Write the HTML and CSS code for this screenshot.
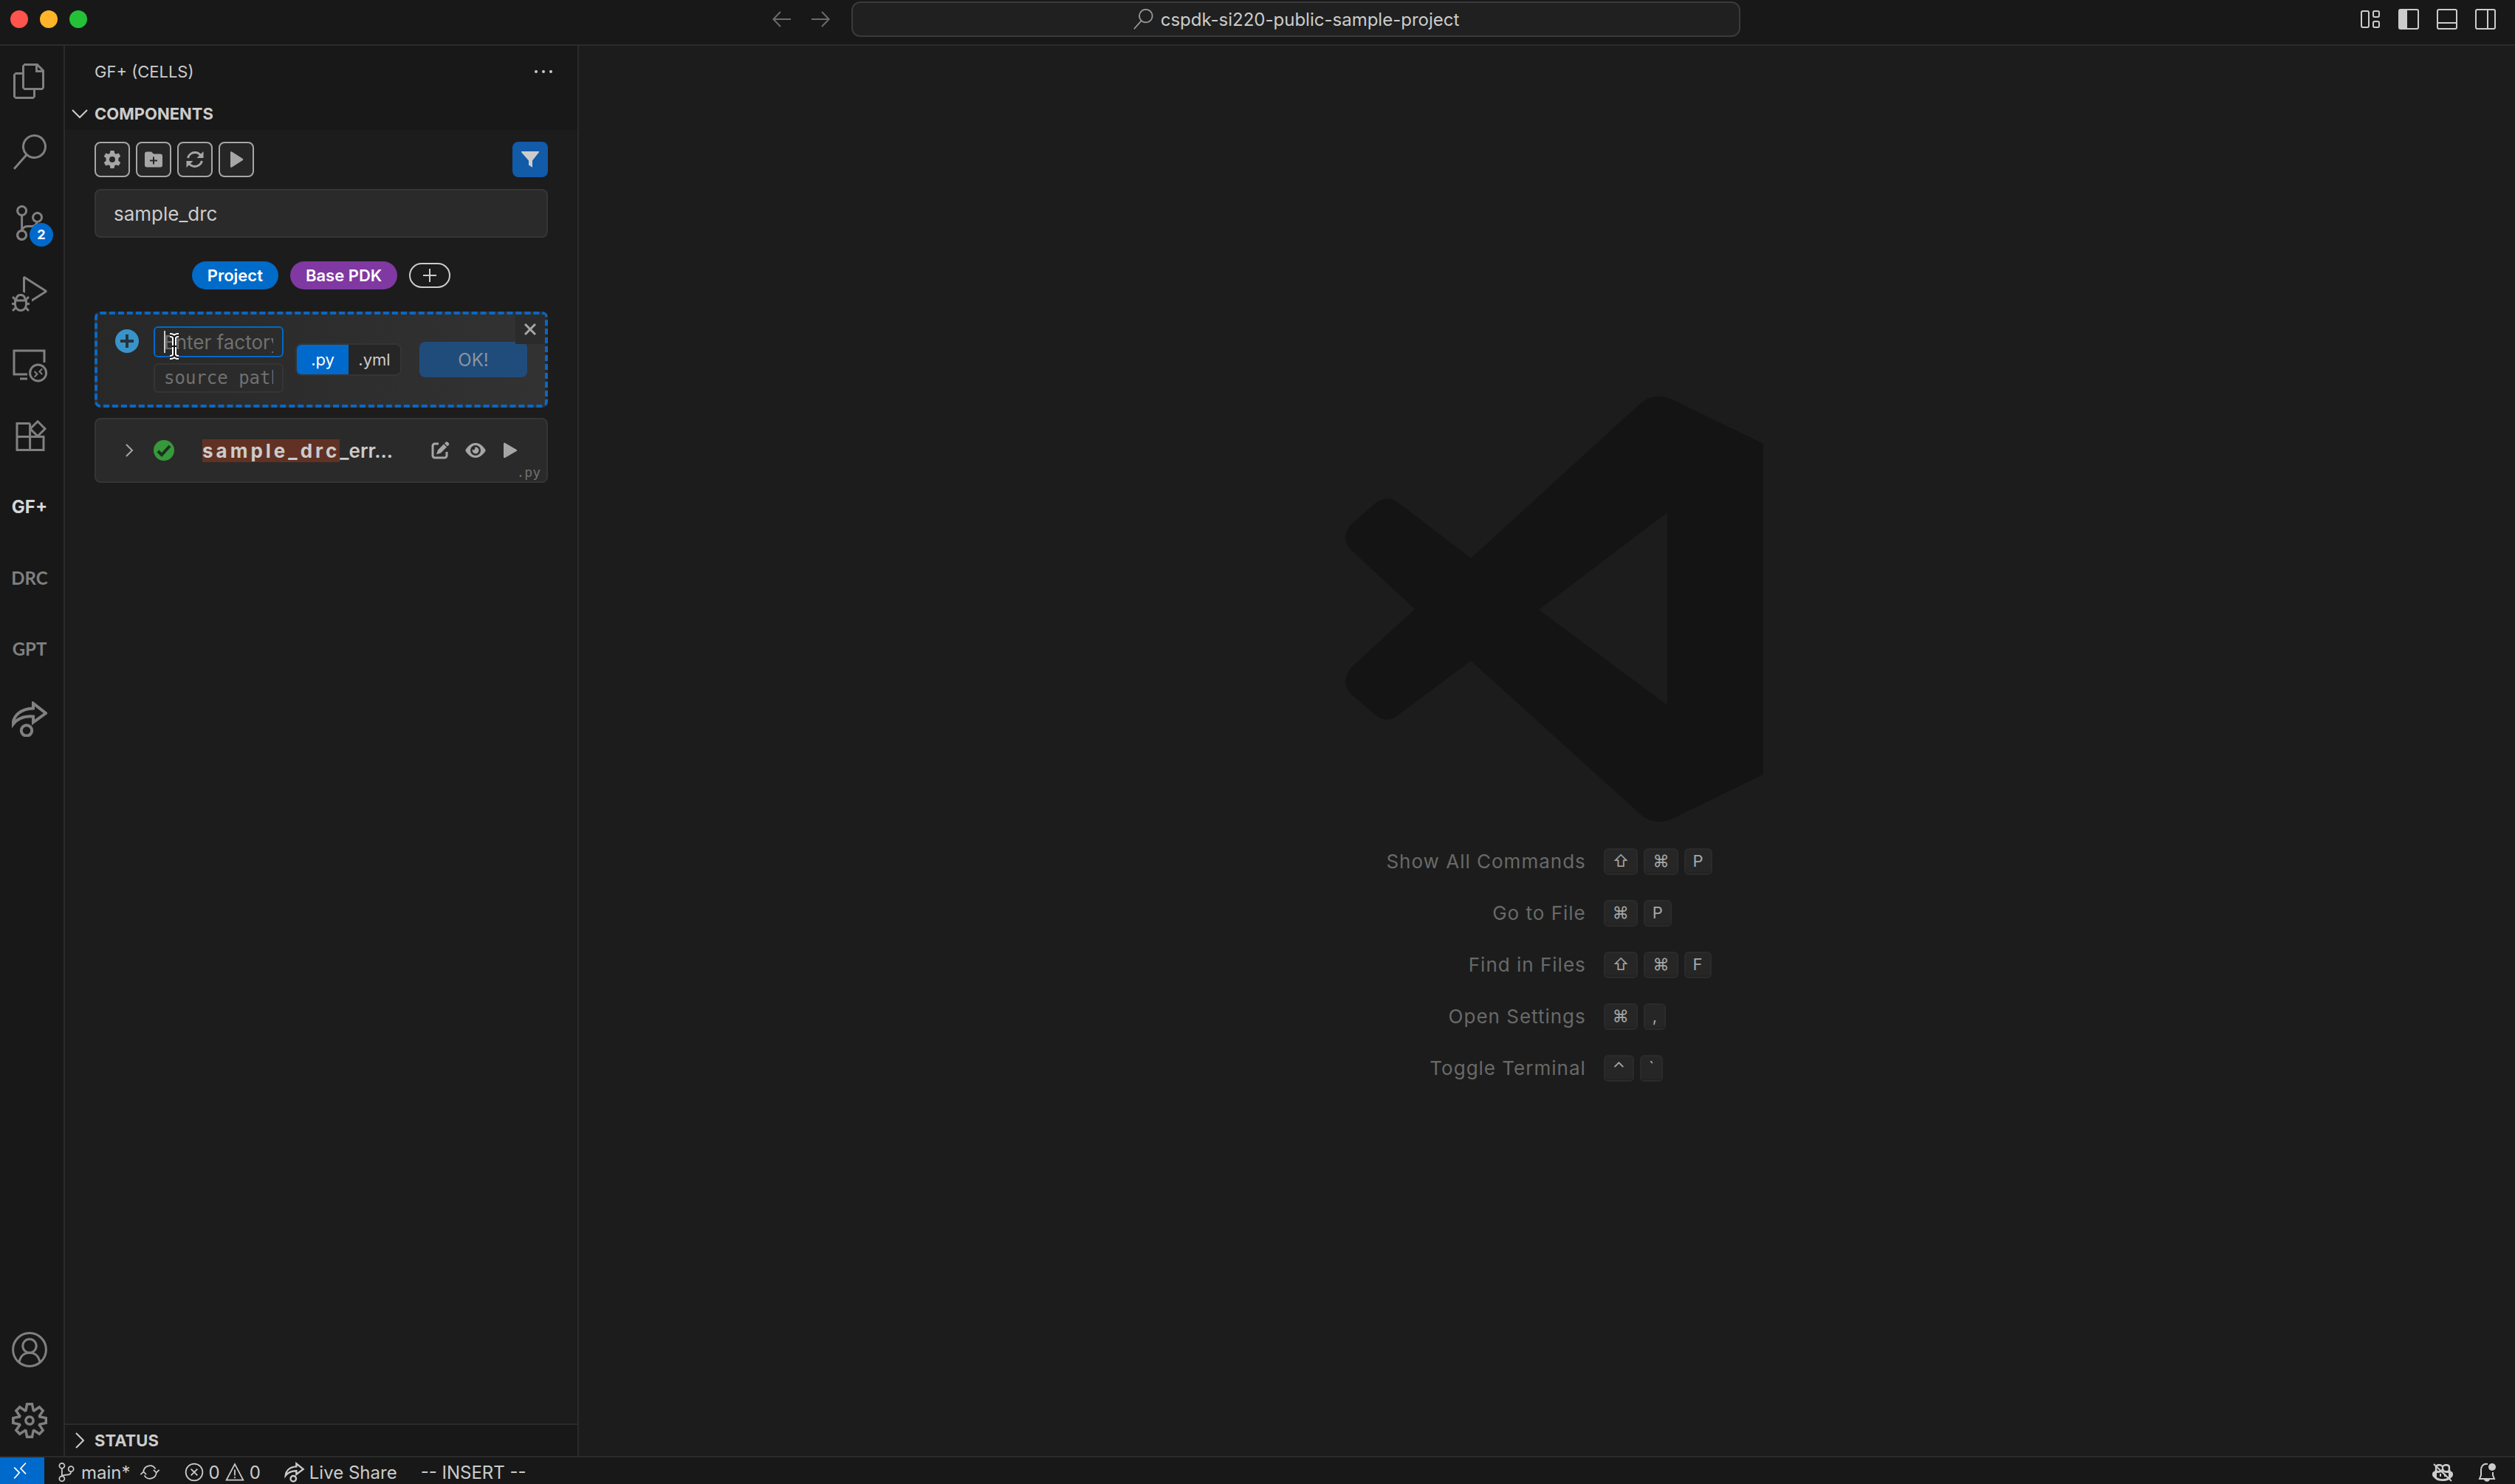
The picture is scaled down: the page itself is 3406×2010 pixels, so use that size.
FILE: index.html
```html
<!DOCTYPE html>
<html lang="en">
<head>
  <meta charset="UTF-8" />
  <meta name="viewport" content="width=device-width, initial-scale=1.0" />
  <title>cspdk-si220-public-sample-project</title>
  <link rel="stylesheet" href="styles.css">
</head>
<body>
  <header class="titlebar">
    <div class="titlebar-side">
      <div class="lights">
        <span class="light red"></span>
        <span class="light yellow"></span>
        <span class="light green"></span>
      </div>
    </div>
    <div class="titlebar-center">
      <button class="nav-btn" aria-label="Go back"><svg width="32" height="32" viewBox="0 0 16 16"><path class="line" d="M14 8H2.5M7 3L2.2 8 7 13"/></svg></button>
      <button class="nav-btn" aria-label="Go forward"><svg width="32" height="32" viewBox="0 0 16 16"><path class="line" d="M2 8h11.5M9 3l4.8 5L9 13"/></svg></button>
      <button class="command-center">
        <svg width="28" height="28" viewBox="0 0 24 24"><path d="M15.25 0a8.25 8.25 0 0 0-6.18 13.72L1 22.88l1.12 1 8.05-9.12A8.251 8.251 0 1 0 15.25.01V0zm0 15a6.75 6.75 0 1 1 0-13.5 6.75 6.75 0 0 1 0 13.5z"/></svg>
        <span>cspdk-si220-public-sample-project</span>
      </button>
    </div>
    <div class="titlebar-side layout-btns">
      <button aria-label="Customize layout"><svg width="32" height="32" viewBox="0 0 16 16"><g class="line"><rect x="2" y="2.5" width="5" height="11" rx="1"/><rect x="10" y="2.5" width="4" height="4" rx="1"/><rect x="10" y="9.5" width="4" height="4" rx="1"/></g></svg></button>
      <button aria-label="Toggle primary side bar"><svg width="32" height="32" viewBox="0 0 16 16"><rect class="line" x="1.5" y="1.5" width="13" height="13" rx="1"/><path d="M1.5 1.5H7v13H1.5z"/></svg></button>
      <button aria-label="Toggle panel"><svg width="32" height="32" viewBox="0 0 16 16"><rect class="line" x="1.5" y="1.5" width="13" height="13" rx="1"/><path class="line" d="M1.5 10.5h13"/></svg></button>
      <button aria-label="Toggle secondary side bar"><svg width="32" height="32" viewBox="0 0 16 16"><rect class="line" x="1.5" y="1.5" width="13" height="13" rx="1"/><path class="line" d="M9.5 1.5v13"/></svg></button>
    </div>
  </header>

  <main class="workbench">
    <nav class="activitybar" aria-label="Views">
      <button aria-label="Explorer"><svg width="48" height="48" viewBox="0 0 24 24"><path d="M17.5 0h-9L7 1.5V6H2.5L1 7.5v15.07L2.5 24h12.07L16 22.57V18h4.7l1.3-1.43V4.5L17.5 0zm0 2.12l2.38 2.38H17.5V2.12zm-3 20.38h-12v-15H7v9.07L8.5 18h6v4.5zm6-6h-12v-15H16V6h4.5v10.5z"/></svg></button>
      <button aria-label="Search"><svg width="48" height="48" viewBox="0 0 24 24"><path d="M15.25 0a8.25 8.25 0 0 0-6.18 13.72L1 22.88l1.12 1 8.05-9.12A8.251 8.251 0 1 0 15.25.01V0zm0 15a6.75 6.75 0 1 1 0-13.5 6.75 6.75 0 0 1 0 13.5z"/></svg></button>
      <button aria-label="Source Control"><svg width="48" height="48" viewBox="0 0 24 24"><path d="M21.007 8.222A3.738 3.738 0 0 0 15.045 5.2a3.737 3.737 0 0 0 1.156 6.583 2.988 2.988 0 0 1-2.668 1.67h-2.99a4.456 4.456 0 0 0-2.989 1.165V7.4a3.737 3.737 0 1 0-1.494 0v9.117a3.776 3.776 0 1 0 1.816.099 2.99 2.99 0 0 1 2.668-1.667h2.99a4.484 4.484 0 0 0 4.223-3.039 3.736 3.736 0 0 0 3.25-3.687zM4.565 3.738a2.242 2.242 0 1 1 4.484 0 2.242 2.242 0 0 1-4.484 0zm4.484 16.441a2.242 2.242 0 1 1-4.484 0 2.242 2.242 0 0 1 4.484 0zm8.221-9.715a2.242 2.242 0 1 1 0-4.485 2.242 2.242 0 0 1 0 4.485z"/></svg><span class="badge">2</span></button>
      <button aria-label="Run and Debug"><svg width="48" height="48" viewBox="0 0 24 24"><path d="M10.94 13.5l-1.32 1.32a3.73 3.73 0 0 0-7.24 0L1.06 13.5 0 14.56l1.72 1.72-.22.22V18H0v1.5h1.5v.08c.077.489.214.966.41 1.42L0 22.94 1.06 24l1.65-1.65A4.308 4.308 0 0 0 6 24a4.31 4.31 0 0 0 3.29-1.65L10.94 24 12 22.94 10.09 21c.198-.464.336-.951.41-1.45v-.1H12V18h-1.5v-1.5l-.22-.22L12 14.56l-1.06-1.06zM6 13.5a2.25 2.25 0 0 1 2.25 2.25h-4.5A2.25 2.25 0 0 1 6 13.5zm3 6a3.33 3.33 0 0 1-3 3 3.33 3.33 0 0 1-3-3v-2.25h6v2.25zm14.76-9.9v1.26L13.5 17.37V15.6l8.5-5.37L9 2v9.46a5.07 5.07 0 0 0-1.5-.72V.63L8.64 0l15.12 9.6z"/></svg></button>
      <button aria-label="Remote Explorer"><svg width="48" height="48" viewBox="0 0 24 24"><path class="line thick" d="M10.5 18.5h-9v-16h20.500v8M5.500 21.500h5"/><circle class="line thick" cx="17.800" cy="17.500" r="5.500"/><path class="line" d="M15.300 16.500l1.900 1.900-1.900 1.900M20.600 14.700l-1.900 1.900 1.900 1.900"/></svg></button>
      <button aria-label="Extensions"><svg width="48" height="48" viewBox="0 0 24 24"><path class="line thick" d="M12.3 3.800H3.500v18h18v-9H3.500M12.300 3.800v18M17.500 2.400l5 5-5 5-5-5z"/></svg></button>
      <button class="active">GF+</button>
      <button class="humanist">DRC</button>
      <button class="humanist">GPT</button>
      <button aria-label="Live Share"><svg width="48" height="48" viewBox="0 0 24 24"><path class="line heavy" d="M.8 15.500C1 9.800 5.500 5 14.500 4.700V1.300L23 8l-8.500 6.200v-4C8 9.800 3.800 11.500.8 15.500z"/><circle class="line heavy" cx="10" cy="19.700" r="3.600"/></svg></button>
      <span class="grow"></span>
      <button aria-label="Accounts"><svg width="48" height="48" viewBox="0 0 24 24"><g class="line thick"><circle cx="12" cy="12" r="11.200"/><circle cx="12" cy="9.500" r="4.600"/><path d="M5 20.700c.6-4 3-6.600 7-6.600s6.400 2.600 7 6.600"/></g></svg></button>
      <button aria-label="Manage"><svg width="48" height="48" viewBox="0 0 24 24"><path fill-rule="evenodd" d="M19.85 8.75l4.15.83v4.84l-4.15.83 2.35 3.52-3.43 3.43-3.52-2.35-.83 4.15H9.58l-.83-4.15-3.52 2.35-3.43-3.43 2.35-3.52L0 14.42V9.58l4.15-.83L1.8 5.23 5.23 1.8l3.52 2.35L9.58 0h4.84l.83 4.15 3.52-2.35 3.43 3.43-2.35 3.52zm-1.57 5.07l4-.81v-2l-4-.81-.54-1.3 2.29-3.43-1.43-1.43-3.43 2.29-1.3-.54-.81-4h-2l-.81 4-1.3.54-3.43-2.29-1.43 1.43L6.38 8.9l-.54 1.3-4 .81v2l4 .81.54 1.3-2.29 3.43 1.43 1.43 3.43-2.29 1.3.54.81 4h2l.81-4 1.3-.54 3.43 2.29 1.43-1.43-2.29-3.43.54-1.3zm-8.186-4.672A3.43 3.43 0 0 1 12 8.57 3.44 3.44 0 0 1 15.43 12a3.43 3.43 0 1 1-5.336-2.852zm.956 4.274c.281.188.612.288.95.288A1.7 1.7 0 0 0 13.71 12a1.71 1.71 0 1 0-2.66 1.422z"/></svg></button>
    </nav>

    <aside class="sidebar">
      <div class="sidebar-title">
        <span>GF+ (CELLS)</span>
        <button aria-label="More actions"><svg width="32" height="32" viewBox="0 0 16 16"><circle cx="3" cy="8" r="1"/><circle cx="8" cy="8" r="1"/><circle cx="13" cy="8" r="1"/></svg></button>
      </div>
      <button class="section-header"><svg width="32" height="32" viewBox="0 0 16 16"><path class="line" d="M3 5.500l5 5 5-5"/></svg>COMPONENTS</button>

      <div class="components">
        <div class="toolbar">
          <button class="tool" aria-label="Settings"><svg width="24" height="24" viewBox="0 0 24 24"><path fill-rule="evenodd" d="M9.500 0h5l.7 3.600 2 1.200 3.500-1.300 2.500 4.300-2.800 2.400v3.600l2.800 2.400-2.500 4.300-3.500-1.300-2 1.200-.7 3.600h-5l-.7-3.600-2-1.200-3.500 1.300L.8 16.200l2.800-2.400v-3.600L.8 7.800l2.500-4.300 3.500 1.300 2-1.200zM12 8a4 4 0 1 0 0 8 4 4 0 0 0 0-8z"/></svg></button>
          <button class="tool" aria-label="New folder"><svg width="24" height="24" viewBox="0 0 24 24"><path fill-rule="evenodd" d="M3 1.500h6l3 3h9a3 3 0 0 1 3 3v12a3 3 0 0 1-3 3H3a3 3 0 0 1-3-3v-15a3 3 0 0 1 3-3zM11 8.500v4H7v2h4v4h2v-4h4v-2h-4v-4z"/></svg></button>
          <button class="tool" aria-label="Refresh"><svg width="24" height="24" viewBox="0 0 24 24"><path class="line bold" d="M2.500 10C3.800 5.500 7.600 2.500 12 2.500c3.700 0 6.500 1.800 8.500 5M21.500 14c-1.300 4.500-5.100 7.500-9.500 7.500-3.700 0-6.500-1.800-8.500-5"/><path d="M23.500 1v9h-9zM.5 23v-9h9z"/></svg></button>
          <button class="tool" aria-label="Run"><svg width="24" height="24" viewBox="0 0 24 24"><path d="M4 2.500c0-1 1-1.600 2-1L20.500 10.700c1 .6 1 2 0 2.600L6 22.500c-1 .6-2 0-2-1z"/></svg></button>
          <button class="tool filter" aria-label="Filter"><svg width="24" height="24" viewBox="0 0 24 24"><path d="M.5 1h23c.5 0 .8.6.4 1.200L15 13.500v9.300l-5-3.300v-6L.1 2.200C-.3 1.600 0 1 .5 1z"/></svg></button>
        </div>

        <input class="search" type="text" aria-label="Search components" value="sample_drc">

        <div class="tags">
          <button class="tag project">Project</button>
          <button class="tag pdk">Base PDK</button>
          <button class="tag add" aria-label="Add tag"><svg width="20" height="20" viewBox="0 0 20 20"><path class="line bold" d="M10 1v18M1 10h18"/></svg></button>
        </div>

        <form class="card new-cell">
          <svg class="plus-icon" width="32" height="32" viewBox="0 0 32 32"><circle cx="16" cy="16" r="16"/><path d="M16 7v18M7 16h18"/></svg>
          <div class="fields">
            <div class="name-field">
              <input type="text" aria-label="Factory name" placeholder="Enter factory name">
              <span class="caret"></span>
              <svg class="ibeam" width="20" height="36" viewBox="0 0 20 36"><path class="halo" d="M4 3c3 0 6 1 6 4 0-3 3-4 6-4M4 33c3 0 6-1 6-4 0 3 3 4 6 4M10 7v22M7 18h6"/><path class="core" d="M4 3c3 0 6 1 6 4 0-3 3-4 6-4M4 33c3 0 6-1 6-4 0 3 3 4 6 4M10 7v22M7 18h6"/></svg>
            </div>
            <input class="path" type="text" aria-label="Source path" placeholder="source path">
          </div>
          <div class="toggle">
            <button type="button" class="on">.py</button>
            <button type="button">.yml</button>
          </div>
          <button class="ok" type="submit" disabled>OK!</button>
          <button class="close" type="button" aria-label="Close"><svg width="16" height="16" viewBox="0 0 16 16"><path class="line bold" d="M1 1l14 14M15 1L1 15"/></svg></button>
        </form>

        <div class="card cell">
          <button class="expand" aria-label="Expand"><svg width="16" height="20" viewBox="0 0 16 20"><path class="line bold" d="M3 2l8 8-8 8"/></svg></button>
          <svg class="check" width="28" height="28" viewBox="0 0 28 28"><circle cx="14" cy="14" r="14"/><path d="M6 15l5 5L22 8"/></svg>
          <span class="cell-name"><mark>sample_drc</mark>_err...</span>
          <span class="cell-actions">
            <button aria-label="Edit"><svg width="28" height="28" viewBox="0 0 28 28"><path class="line edit-box" d="M12 5H7a3 3 0 0 0-3 3v13a3 3 0 0 0 3 3h13a3 3 0 0 0 3-3v-5"/><path d="M11 13.500l8-8 4 4-8 8-6 2zM20 4.500l1.500-1.500c1-1 2-1 3 0l1 1c1 1 1 2 0 3L24 8.500z"/></svg></button>
            <button aria-label="Show"><svg width="28" height="28" viewBox="0 0 28 28"><path fill-rule="evenodd" d="M14 4c6 0 11 5 13.500 9.300v1.400C25 19 20 24 14 24S3 19 .5 14.700v-1.400C3 9 8 4 14 4zm0 3a7 7 0 1 0 0 14 7 7 0 0 0 0-14zm0 2.500a4.500 4.500 0 1 1-4.400 3.600c2 1 4.300-.4 3.900-3.600z"/></svg></button>
            <button aria-label="Run"><svg width="28" height="28" viewBox="0 0 28 28"><path d="M4 5c0-1 1-1.500 2-1l15.500 9c1 .5 1 1.500 0 2L6 24c-1 .5-2 0-2-1z"/></svg></button>
          </span>
          <span class="ext">.py</span>
        </div>
      </div>

      <button class="section-header status-header"><svg width="32" height="32" viewBox="0 0 16 16"><path class="line" d="M5.500 3l5 5-5 5"/></svg>STATUS</button>
    </aside>

    <section class="editor">
      <svg class="logo" width="566" height="576" viewBox="0 0 566 576"><path fill-rule="evenodd" d="M400 9Q418-6 440 3L566 64V512L440 573Q420 581 402 568L170 358 72 431Q56 444 40 431L8 403Q-8 387 8 367L94 288 8 208Q-8 192 8 173L40 145Q56 132 72 144L170 219zM262 289L436 418V157z"/></svg>
      <dl class="shortcuts">
        <dt>Show All Commands</dt><dd><kbd>⇧</kbd><kbd>⌘</kbd><kbd>P</kbd></dd>
        <dt>Go to File</dt><dd><kbd>⌘</kbd><kbd>P</kbd></dd>
        <dt>Find in Files</dt><dd><kbd>⇧</kbd><kbd>⌘</kbd><kbd>F</kbd></dd>
        <dt>Open Settings</dt><dd><kbd>⌘</kbd><kbd>,</kbd></dd>
        <dt>Toggle Terminal</dt><dd><kbd>⌃</kbd><kbd>`</kbd></dd>
      </dl>
    </section>
  </main>

  <footer class="statusbar">
    <button class="remote" aria-label="Open remote window"><svg width="28" height="28" viewBox="0 0 16 16"><path class="line" d="M3 5.500l4 4-4 4.500M12 2L8 6.300l4 4.200"/></svg></button>
    <button class="item"><svg width="28" height="28" viewBox="0 0 16 16"><g class="line"><circle cx="4.500" cy="3" r="2"/><circle cx="4.500" cy="13" r="2"/><circle cx="11.500" cy="5.500" r="2"/><path d="M4.500 5v6M11.500 7.500c0 2-1.500 2.500-3.500 2.500s-3.500.5-3.500 1.500"/></g></svg>main*</button>
    <button class="item sync" aria-label="Synchronize changes"><svg width="28" height="28" viewBox="0 0 16 16"><path class="line" d="M3 8a5 5 0 0 1 9.300-2.500M13 8a5 5 0 0 1-9.300 2.500M10.800 6.200L13 8.300l2.200-2.100M.8 9.800L3 7.700l2.200 2.100"/></svg></button>
    <button class="item problems"><svg width="28" height="28" viewBox="0 0 16 16"><g class="line"><circle cx="8" cy="8" r="6.500"/><path d="M5.500 5.500l5 5M10.500 5.500l-5 5"/></g></svg>0<svg width="28" height="28" viewBox="0 0 16 16"><path class="line" d="M8 1.800L14.500 14h-13zM8 6v4.500M8 11.500v1.200"/></svg>0</button>
    <button class="item share"><svg width="28" height="28" viewBox="0 0 24 24"><path class="line heavy" d="M1.500 16C2 10.500 6 6 14 5.500V2l8 6.500-8 6v-4C8.500 10.500 4.500 12 1.500 16z"/><circle class="line heavy" cx="10.500" cy="19.500" r="3.200"/></svg>Live Share</button>
    <span class="item mode">-- INSERT --</span>
    <span class="grow"></span>
    <button class="item" aria-label="Copilot disabled"><svg width="32" height="28" viewBox="0 0 32 28"><path fill-rule="evenodd" d="M6 10C5 4 8 3 11 3c2 0 4 .5 5 2 1-1.500 3-2 5-2 3 0 6 1 5 7l1 3c2 0 3 1.500 3 4s-1 3.500-2 4c-3 4-7 5-12 5S7 25 4 21c-1-.5-2-1.500-2-4s1-4 3-4zM9 6c-1 1-1 5 0 6h3c2 0 3-2 3-4 0-3-4-3-6-2zm14 0c-2-1-6-1-6 2 0 2 1 4 3 4h3c1-1 1-5 0-6zM8 15v6c5 3 11 3 16 0v-6c-3 0-6 0-8-2-2 2-5 2-8 2z"/><path class="line bold" d="M13 16v4M19 16v4M4 3l24 23"/></svg></button>
    <button class="item bell" aria-label="Notifications"><svg width="28" height="28" viewBox="0 0 28 28"><path class="line bold" d="M15 3C9 2 6 6 6 11v7l-2 5h20l-2-5v-4"/><circle cx="21" cy="7" r="5"/><path d="M10 23h8c0 5-8 5-8 0z"/></svg></button>
  </footer>
</body>
</html>
```
FILE: styles.css
```css
* {
  box-sizing: border-box;
}
body {
  margin: 0;
  height: 100vh;
  display: flex;
  flex-direction: column;
  overflow: hidden;
  background: #181818;
  color: #cccccc;
  font-family: Inter, "Liberation Sans", sans-serif;
  font-size: 24px;
}
button {
  display: flex;
  align-items: center;
  justify-content: center;
  padding: 0;
  border: none;
  background: none;
  color: inherit;
  font: inherit;
}
input {
  font: inherit;
}
svg {
  display: block;
  flex: none;
  fill: currentColor;
}
.line {
  fill: none;
  stroke: currentColor;
  stroke-width: 1;
}
.thick {
  stroke-width: 1.5;
}
.heavy {
  stroke-width: 2;
}
.bold {
  stroke-width: 3;
}
.grow {
  flex: 1;
}

/* title bar */
.titlebar {
  display: flex;
  height: 62px;
  padding-bottom: 8px;
  border-bottom: 2px solid #2b2b2b;
}
.titlebar-side {
  flex: 1;
  display: flex;
  align-items: center;
}
.lights {
  display: flex;
  gap: 16px;
  padding-left: 14px;
}
.light {
  width: 24px;
  height: 24px;
  border-radius: 50%;
}
.red {
  background: #ff544d;
}
.yellow {
  background: #ffb429;
}
.green {
  background: #24c138;
}
.titlebar-center {
  display: flex;
  align-items: center;
  gap: 8px;
  padding-left: 12px;
}
.nav-btn {
  width: 44px;
  color: #6b6b6b;
}
.command-center {
  width: 1204px;
  height: 48px;
  margin-left: 12px;
  gap: 10px;
  border: 2px solid #3a3a3a;
  border-radius: 12px;
  background: #202020;
}
.command-center svg {
  color: #9a9a9a;
}
.layout-btns {
  justify-content: flex-end;
  gap: 20px;
  padding-right: 24px;
}

.workbench {
  flex: 1;
  display: flex;
  min-height: 0;
}

/* activity bar */
.activitybar {
  display: flex;
  flex-direction: column;
  width: 88px;
  border-right: 2px solid #2b2b2b;
  color: #808080;
}
.activitybar button {
  position: relative;
  width: 80px;
  height: 96px;
  font-size: 24px;
  font-weight: 700;
}
.activitybar .active {
  color: #d7d7d7;
}
.activitybar .humanist {
  font-family: Lato, "Open Sans", sans-serif;
}
.activitybar .badge {
  position: absolute;
  left: 40px;
  top: 48px;
  width: 32px;
  height: 32px;
  border-radius: 50%;
  background: #0069cc;
  color: #fff;
  font-size: 18px;
  line-height: 32px;
}

/* side bar */
.sidebar {
  display: flex;
  flex-direction: column;
  width: 696px;
  border-right: 2px solid #2b2b2b;
}
.sidebar-title {
  display: flex;
  align-items: center;
  justify-content: space-between;
  height: 70px;
  padding: 0 30px 0 40px;
  font-size: 22px;
}
.section-header {
  justify-content: flex-start;
  height: 44px;
  padding-left: 4px;
  gap: 4px;
  font-size: 22px;
  font-weight: 700;
}
.status-header {
  border-top: 2px solid #2b2b2b;
}
.components {
  flex: 1;
  display: flex;
  flex-direction: column;
  padding: 16px 40px;
  background: #1c1c1c;
}
.toolbar {
  display: flex;
  gap: 8px;
}
.tool {
  width: 48px;
  height: 48px;
  border: 2px solid #a6a6a6;
  border-radius: 8px;
  background: #262626;
  color: #a6a6a6;
}
.filter {
  margin-left: auto;
  border-color: #115ba9;
  background: #115ba9;
  color: #cccccc;
}
.search {
  height: 66px;
  margin-top: 16px;
  padding: 0 24px;
  border: 2px solid #353535;
  border-radius: 8px;
  background: #2a2a2a;
  color: #cccccc;
  font-size: 26px;
}
.tags {
  display: flex;
  align-items: center;
  justify-content: center;
  gap: 16px;
  margin-top: 32px;
}
.tag {
  height: 38px;
  padding: 0 21px;
  border-radius: 19px;
  color: #fff;
  font-size: 22px;
  font-weight: 600;
}
.project {
  background: #006bc8;
}
.pdk {
  background: #8038a2;
}
.add {
  width: 56px;
  height: 34px;
  padding: 0;
  border: 2px solid #cccccc;
  color: #cccccc;
}
.add .bold {
  stroke-width: 2;
}
.card {
  position: relative;
  display: flex;
  align-items: center;
  border-radius: 8px;
  background: #2a2a2a;
}

/* new cell form */
.new-cell {
  height: 130px;
  margin-top: 30px;
  padding: 0 24px;
  border: 4px dashed #0a68c4;
  background: linear-gradient(90deg, #282828, #323232);
}
.plus-icon {
  align-self: flex-start;
  margin-top: 20px;
  fill: #3a93c8;
}
.plus-icon path {
  stroke: #26333c;
  stroke-width: 4;
}
.fields {
  display: flex;
  flex-direction: column;
  gap: 8px;
  width: 176px;
  margin-left: 20px;
}
.fields input {
  display: block;
  width: 100%;
  height: 42px;
  padding: 0 12px;
  border: 2px solid #353535;
  border-radius: 6px;
  background: none;
  color: #cccccc;
  font-size: 26px;
}
.fields .path {
  height: 40px;
  font-family: "DejaVu Sans Mono", monospace;
  font-size: 24px;
}
.fields input::placeholder {
  color: #707070;
}
.name-field {
  position: relative;
}
.name-field input {
  border-color: #0069cc;
}
.caret {
  position: absolute;
  left: 14px;
  top: 6px;
  width: 2px;
  height: 30px;
  background: #cccccc;
}
.ibeam {
  position: absolute;
  left: 18px;
  top: 9px;
  fill: none;
}
.halo {
  stroke: #fff;
  stroke-width: 6;
}
.core {
  stroke: #111;
  stroke-width: 2;
}
.toggle {
  display: flex;
  height: 44px;
  margin: 0 24px 0 16px;
  border: 2px solid #353535;
  border-radius: 8px;
  background: #262626;
  font-size: 22px;
  overflow: hidden;
}
.toggle button {
  width: 70px;
}
.toggle .on {
  background: #0069cc;
  color: #fff;
}
.ok {
  flex: 1;
  height: 48px;
  border-radius: 8px;
  background: #204c7b;
  color: #8f949b;
}
.close {
  position: absolute;
  top: 0;
  right: 0;
  width: 40px;
  height: 40px;
  background: #2b2b2b;
  color: #a6a6a6;
}
.close .bold {
  stroke-width: 3;
}

/* cell row */
.cell {
  height: 88px;
  margin-top: 14px;
  padding: 0 34px 0 38px;
  border: 2px solid #353535;
  color: #a6a6a6;
}
.expand .bold {
  stroke-width: 2;
}
.edit-box {
  stroke-width: 3;
}
.check {
  margin-left: 24px;
  fill: #36993a;
}
.check path {
  fill: none;
  stroke: #1f2f20;
  stroke-width: 4;
}
.cell-name {
  flex: 1;
  margin-left: 38px;
  color: #cccccc;
  font-size: 26px;
  font-weight: 600;
}
.cell-name mark {
  background: #613223;
  color: inherit;
  font-weight: 700;
  letter-spacing: 4px;
}
.cell-actions {
  display: flex;
  gap: 20px;
}
.ext {
  position: absolute;
  right: 8px;
  bottom: 2px;
  color: #707070;
  font: 18px "DejaVu Sans Mono", monospace;
}

/* empty editor */
.editor {
  flex: 1;
  display: flex;
  flex-direction: column;
  align-items: center;
  justify-content: center;
  padding-bottom: 32px;
  background: #1c1c1c;
}
.logo {
  margin-left: 20px;
  fill: #141414;
}
.shortcuts {
  display: grid;
  grid-template-columns: auto auto;
  gap: 34px 24px;
  align-items: center;
  margin: 36px 0 0;
  padding-left: 6px;
}
.shortcuts dt {
  height: 36px;
  color: #696969;
  font-size: 26px;
  line-height: 36px;
  text-align: right;
  letter-spacing: 1px;
}
.shortcuts dd {
  display: flex;
  gap: 8px;
  margin: 0;
}
kbd {
  height: 36px;
  padding: 0 10px;
  border: 2px solid #2b2b2b;
  border-radius: 6px;
  background: #262626;
  box-shadow: inset 0 -2px 0 #222222;
  color: #a6a6a6;
  font: 22px/30px Inter, "DejaVu Sans", sans-serif;
}

/* status bar */
.statusbar {
  display: flex;
  height: 38px;
  border-top: 2px solid #2b2b2b;
}
.statusbar .item {
  display: flex;
  align-items: center;
  gap: 6px;
  margin-top: 4px;
  margin-left: 16px;
}
.statusbar .remote {
  width: 60px;
  padding-right: 4px;
  background: #0069cc;
  color: #fff;
}
.statusbar .sync {
  margin-left: 12px;
}
.statusbar .problems {
  margin-left: 32px;
}
.statusbar .share,
.statusbar .mode {
  margin-left: 32px;
}
.statusbar .bell {
  margin: 4px 24px 0 30px;
}
.statusbar .bold {
  stroke-width: 2;
}
```
